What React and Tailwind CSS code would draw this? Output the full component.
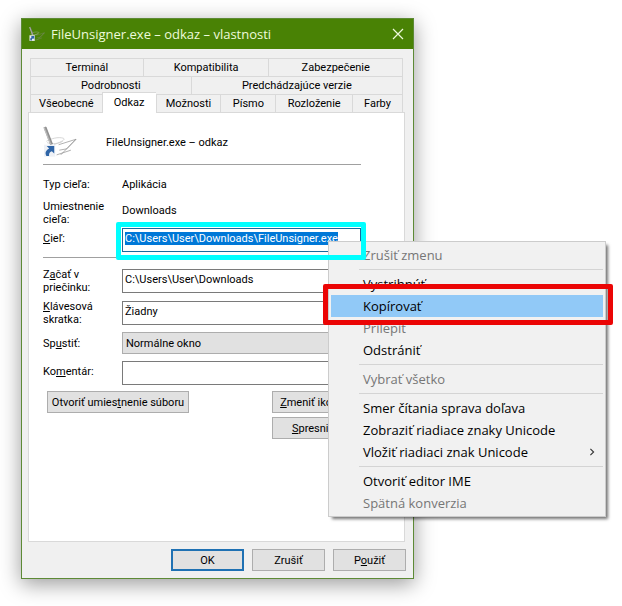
import React, { useEffect, useRef } from 'react';

const tabRows = [
  [
    { name: 'Terminál', size: 'flex-[113]' },
    { name: 'Kompatibilita', size: 'flex-[126]' },
    { name: 'Zabezpečenie', size: 'flex-[134]' },
  ],
  [
    { name: 'Podrobnosti', size: 'flex-[161]' },
    { name: 'Predchádzajúce verzie', size: 'flex-[212]' },
  ],
  [
    { name: 'Všeobecné', size: 'flex-[72]' },
    { name: 'Odkaz', size: 'flex-[54]', active: true },
    { name: 'Možnosti', size: 'flex-[65]' },
    { name: 'Písmo', size: 'flex-[55]' },
    { name: 'Rozloženie', size: 'flex-[77]' },
    { name: 'Farby', size: 'flex-[50]' },
  ],
];

const menuGroups = [
  [{ name: 'Zrušiť zmenu', disabled: true }],
  [
    { name: 'Vystrihnúť' },
    { name: 'Kopírovať', selected: true },
    { name: 'Prilepiť', disabled: true },
    { name: 'Odstrániť' },
  ],
  [{ name: 'Vybrať všetko', disabled: true }],
  [
    { name: 'Smer čítania sprava doľava' },
    { name: 'Zobraziť riadiace znaky Unicode' },
    { name: 'Vložiť riadiaci znak Unicode', submenu: true },
  ],
  [{ name: 'Otvoriť editor IME' }, { name: 'Spätná konverzia', disabled: true }],
];

const field = 'block w-full h-6 border bg-white pl-[2px] pt-[3px] pb-[6px] outline-none';
const button = 'h-[22px] border border-[#adadad] bg-[#e1e1e1] text-center whitespace-nowrap';

function FileIcon({ className }) {
  return (
    <svg viewBox="0 0 100 92" className={className} fill="none" aria-hidden="true">
      <path d="M10 44c12-8 36-14 50-9 8 4-8 11-28 19M12 48c16 5 34 3 46-4" stroke="#c4c4c4" strokeWidth="2" />
      <path d="M46 54L97 38 52 84M40 84l42-14M97 38L70 66l-22 4" stroke="#8c8c8c" strokeWidth="2" />
      <path d="M5 2l20 52" stroke="#9a9a9a" strokeWidth="8" />
      <path d="M3 3l19 49" stroke="#d4d4d4" strokeWidth="2" />
      <path d="M9 2l19 50" stroke="#6f6f6f" strokeWidth="1.5" />
      <path d="M3 54h33v35H3z" fill="#eef1f6" />
      <path d="M11 58h22v22l-7-7c-7 3-9 7-8 14h-8c-5-9-2-16 8-22z" fill="#2f65a7" />
    </svg>
  );
}

function Tabs() {
  return (
    <div role="tablist" className="mx-[2px]">
      {tabRows.map((row, i) => (
        <div key={i} className="flex h-[18px] items-end border-r border-[#d9d9d9]">
          {row.map((tab) => (
            <button
              key={tab.name}
              role="tab"
              aria-selected={!!tab.active}
              className={`${tab.size} min-w-0 border-l border-t border-[#d9d9d9] whitespace-nowrap ${
                tab.active ? 'relative z-10 -mb-px h-[21px] bg-white pb-px' : 'h-[18px] bg-[#f0f0f0]'
              }`}
            >
              {tab.name}
            </button>
          ))}
        </div>
      ))}
    </div>
  );
}

function ContextMenu() {
  return (
    <div
      role="menu"
      className="absolute left-[328px] top-[241px] z-20 w-[278px] border border-[#ccc] bg-[#f1f1f1] p-[2px] font-['Open_Sans',sans-serif] text-[13px] shadow-[3px_3px_3px_-1px_rgba(0,0,0,0.55)]"
    >
      {menuGroups.map((group, i) => (
        <div key={i}>
          {i > 0 && <div role="separator" className="my-[3px] ml-7 h-px bg-[#d4d4d4]" />}
          {group.map((item) => (
            <div key={item.name} className="relative">
              <button
                role="menuitem"
                disabled={item.disabled}
                className={`flex h-[22px] w-full items-center justify-between pl-8 pr-2 whitespace-nowrap ${
                  item.disabled ? 'text-[#767676]' : 'text-black'
                } ${item.selected ? 'bg-[#91c9f7]' : ''}`}
              >
                {item.name}
                {item.submenu && (
                  <svg viewBox="0 0 6 10" className="h-2 w-[6px]" fill="none" stroke="#333" strokeWidth="1.4">
                    <path d="M1 1l4 4-4 4" />
                  </svg>
                )}
              </button>
              {item.selected && (
                <div className="pointer-events-none absolute -left-2 -right-[10px] -top-[11px] -bottom-2 z-30 rounded-xs border-5 border-[#eb0505]" />
              )}
            </div>
          ))}
        </div>
      ))}
    </div>
  );
}

export default function App() {
  const target = useRef(null);

  // the target path is selected as soon as the dialog opens
  useEffect(() => {
    target.current.focus();
    target.current.select();
  }, []);

  return (
    <main className="relative min-h-screen bg-white pl-[21px] pt-[18px] pb-[27px] font-['Roboto',sans-serif] text-[11px] leading-[13px] text-black">
      <div
        role="dialog"
        aria-labelledby="dialog-title"
        className="w-full max-w-[393px] border border-[#5d8a35] bg-[#f0f0f0] pb-[7px] shadow-[0_5px_20px_rgba(0,0,0,0.4)]"
      >
        <header className="flex h-[30px] items-center bg-[#498205] pl-[7px] pr-[9px] text-[#eefadb]">
          <FileIcon className="h-4 w-4" />
          <h1 id="dialog-title" className="ml-[6px] flex-1 font-['Open_Sans',sans-serif] text-[13px]">
            FileUnsigner.exe – odkaz – vlastnosti
          </h1>
          <button aria-label="Zavrieť">
            <svg viewBox="0 0 12 12" className="h-3 w-3" stroke="currentColor" strokeWidth="1.2">
              <path d="M1 1l10 10M11 1L1 11" />
            </svg>
          </button>
        </header>

        <div className="ml-[6px] mr-[7px] pt-[9px]">
          <div className="mr-px">
            <Tabs />
            <section role="tabpanel" className="min-h-[430px] border border-[#d9d9d9] bg-white pl-[14px] pr-[43px] pt-[13px]">
              <div className="flex h-8 items-center">
                <FileIcon className="h-8 w-[34px]" />
                <span className="ml-[29px]">FileUnsigner.exe – odkaz</span>
              </div>
              <hr className="mt-[6px] border-[#a0a0a0]" />

              <div className="mt-[13px] grid grid-cols-[79px_1fr] items-center">
                <span>Typ cieľa:</span>
                <span>Aplikácia</span>
              </div>
              <div className="mt-[9px] grid grid-cols-[79px_1fr]">
                <span>Umiestnenie<br />cieľa:</span>
                <span className="mt-1">Downloads</span>
              </div>
              <div className="mt-[2px] grid grid-cols-[79px_1fr]">
                <label htmlFor="target" className="mt-1"><u>C</u>ieľ:</label>
                <div className="relative">
                  <input
                    id="target"
                    ref={target}
                    defaultValue="C:\Users\User\Downloads\FileUnsigner.exe"
                    className={`${field} border-[#1a6a9c] selection:bg-[#0078d7] selection:text-white`}
                  />
                  <div className="pointer-events-none absolute -left-[6px] -right-[5px] -top-[6px] -bottom-2 z-30 rounded-xs border-5 border-[#00ffff]" />
                </div>
              </div>
              <hr className="mt-[5px] border-[#a0a0a0]" />

              <div className="mt-[10px] grid grid-cols-[79px_1fr] items-center">
                <label htmlFor="start">Z<u>a</u>čať v<br />priečinku:</label>
                <input id="start" defaultValue="C:\Users\User\Downloads" className={`${field} border-[#7a7a7a]`} />
              </div>
              <div className="mt-[6px] grid grid-cols-[79px_1fr] items-center">
                <label htmlFor="shortcut"><u>K</u>lávesová<br />skratka:</label>
                <input id="shortcut" defaultValue="Žiadny" className={`${field} border-[#7a7a7a]`} />
              </div>
              <div className="mt-[6px] grid grid-cols-[79px_1fr] items-center">
                <label htmlFor="run">Sp<u>u</u>stiť:</label>
                <select id="run" className="h-[22px] appearance-none border border-[#adadad] bg-[#e1e1e1] pl-[3px]">
                  <option>Normálne okno</option>
                  <option>Minimalizované</option>
                  <option>Maximalizované</option>
                </select>
              </div>
              <div className="mt-[7px] grid grid-cols-[79px_1fr]">
                <label htmlFor="comment" className="mt-1">Ko<u>m</u>entár:</label>
                <input id="comment" className={`${field} border-[#7a7a7a]`} />
              </div>

              <div className="mt-[6px] ml-1 flex justify-between">
                <button className={`${button} w-[142px]`}>Otvoriť umies<u>t</u>nenie súboru</button>
                <button className={`${button} w-[89px]`}><u>Z</u>meniť ikonu...</button>
              </div>
              <div className="mt-1 flex justify-end">
                <button className={`${button} w-[89px]`}><u>S</u>presniť...</button>
              </div>
            </section>
          </div>

          <footer className="mt-[7px] flex justify-end gap-2">
            <button className="h-[22px] w-[73px] border-2 border-[#1f71b3] bg-[#e1e1e1]">OK</button>
            <button className={`${button} w-[73px]`}>Zrušiť</button>
            <button className={`${button} w-[73px]`}>P<u>o</u>užiť</button>
          </footer>
        </div>
      </div>

      <ContextMenu />
    </main>
  );
}
